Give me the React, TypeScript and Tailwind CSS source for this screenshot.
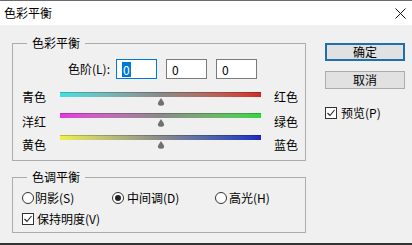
import React from 'react';

const font = { fontFamily: '"Noto Sans CJK SC", "Noto Sans", sans-serif' };

function Thumb() {
  return (
    <svg width="10" height="8" viewBox="0 0 10 8" className="block">
      <path d="M5 0 L7.6 4 Q9.5 7.8 5 7.8 Q0.5 7.8 2.4 4 Z" fill="#707070" />
    </svg>
  );
}

function Track({ from, to }: { from: string; to: string }) {
  return (
    <div className="flex flex-col items-center">
      <div
        className={`h-[5px] w-full border-t border-black/20 bg-gradient-to-r ${from} via-[#8a8a8a] ${to}`}
      />
      <div className="mt-px">
        <Thumb />
      </div>
    </div>
  );
}

function Checkbox() {
  return (
    <span className="flex h-[12px] w-[12px] items-center justify-center border border-[#333] bg-white">
      <svg width="10" height="10" viewBox="0 0 10 10">
        <path d="M1.5 5 L4 7.5 L8.5 2" fill="none" stroke="#222" strokeWidth="1.1" />
      </svg>
    </span>
  );
}

function Radio({ checked }: { checked?: boolean }) {
  return (
    <span className="flex h-[12px] w-[12px] items-center justify-center rounded-full border border-[#333] bg-white">
      {checked && <span className="h-[6px] w-[6px] rounded-full bg-[#222]" />}
    </span>
  );
}

function NumBox({ focused }: { focused?: boolean }) {
  return (
    <div
      className={`flex h-[20px] w-[41px] items-center bg-white pl-[5px] ${
        focused ? 'border border-[#0078d7]' : 'border border-[#7a7a7a]'
      }`}
    >
      {focused ? (
        <span className="bg-[#0078d7] px-px leading-[15px] text-white">0</span>
      ) : (
        <span className="leading-[15px]">0</span>
      )}
    </div>
  );
}

export default function App() {
  return (
    <div
      className="flex h-[245px] w-[412px] flex-col overflow-hidden text-[12px] text-black"
      style={font}
    >
      {/* Title bar */}
      <div className="flex h-[25px] items-center justify-between border-t border-[#6b6b6b] bg-white pl-[4px] pr-[6px]">
        <span className="text-[12px] leading-[14px]">色彩平衡</span>
        <svg width="11" height="11" viewBox="0 0 11 11">
          <path d="M0.5 0.5 L10.5 10.5 M10.5 0.5 L0.5 10.5" stroke="#111" strokeWidth="1" />
        </svg>
      </div>

      {/* Body */}
      <div className="flex flex-1 border-b-2 border-[#333] bg-[#f0f0f0] pl-[12px] pt-[10px]">
        <div className="flex w-[294px] flex-col">
          {/* Colour balance group */}
          <fieldset className="h-[126px] border border-[#adadad]">
            <legend className="ml-[14px] px-[5px] leading-[16px]">色彩平衡</legend>

            <div className="mt-[8px] flex h-[20px] items-center">
              <span className="w-[103px] pr-[6px] text-right leading-[14px]">色阶(L):</span>
              <div className="flex gap-[9px]">
                <NumBox focused />
                <NumBox />
                <NumBox />
              </div>
            </div>

            <div className="mt-[10px] flex pl-[9px]">
              <div className="flex w-[38px] flex-col leading-[14px]">
                <span className="mt-px">青色</span>
                <span className="mt-[11px]">洋红</span>
                <span className="mt-[9px]">黄色</span>
              </div>
              <div className="flex w-[201px] flex-col pt-[3px]">
                <Track from="from-[#3ee0e0]" to="to-[#d42424]" />
                <div className="mt-[7px]">
                  <Track from="from-[#e634dc]" to="to-[#2ed640]" />
                </div>
                <div className="mt-[8px]">
                  <Track from="from-[#f0f048]" to="to-[#2424c4]" />
                </div>
              </div>
              <div className="ml-[13px] flex flex-col leading-[14px]">
                <span className="mt-px">红色</span>
                <span className="mt-[11px]">绿色</span>
                <span className="mt-[9px]">蓝色</span>
              </div>
            </div>
          </fieldset>

          {/* Tone balance group */}
          <fieldset className="mt-[8px] h-[64px] border border-[#adadad]">
            <legend className="ml-[14px] px-[5px] leading-[16px]">色调平衡</legend>
            <div className="mt-[6px] flex h-[14px] items-center pl-[9px] leading-[14px]">
              <label className="flex w-[90px] items-center gap-[1px]">
                <Radio />
                <span>阴影(S)</span>
              </label>
              <label className="flex w-[103px] items-center gap-[3px]">
                <Radio checked />
                <span>中间调(D)</span>
              </label>
              <label className="flex items-center gap-[2px]">
                <Radio />
                <span>高光(H)</span>
              </label>
            </div>
            <label className="mt-[7px] flex h-[14px] items-center gap-[3px] pl-[9px] leading-[14px]">
              <Checkbox />
              <span>保持明度(V)</span>
            </label>
          </fieldset>
        </div>

        {/* Buttons */}
        <div className="ml-[19px] flex w-[80px] flex-col pt-[8px]">
          <button className="h-[18px] border-2 border-[#1f6fb0] bg-[#e1e1e1] leading-[14px]">
            确定
          </button>
          <button className="mt-[10px] h-[18px] border border-[#adadad] bg-[#e1e1e1] leading-[14px]">
            取消
          </button>
          <label className="mt-[17px] flex items-center gap-[4px] pl-[-1px] leading-[14px]">
            <Checkbox />
            <span>预览(P)</span>
          </label>
        </div>
      </div>
    </div>
  );
}
